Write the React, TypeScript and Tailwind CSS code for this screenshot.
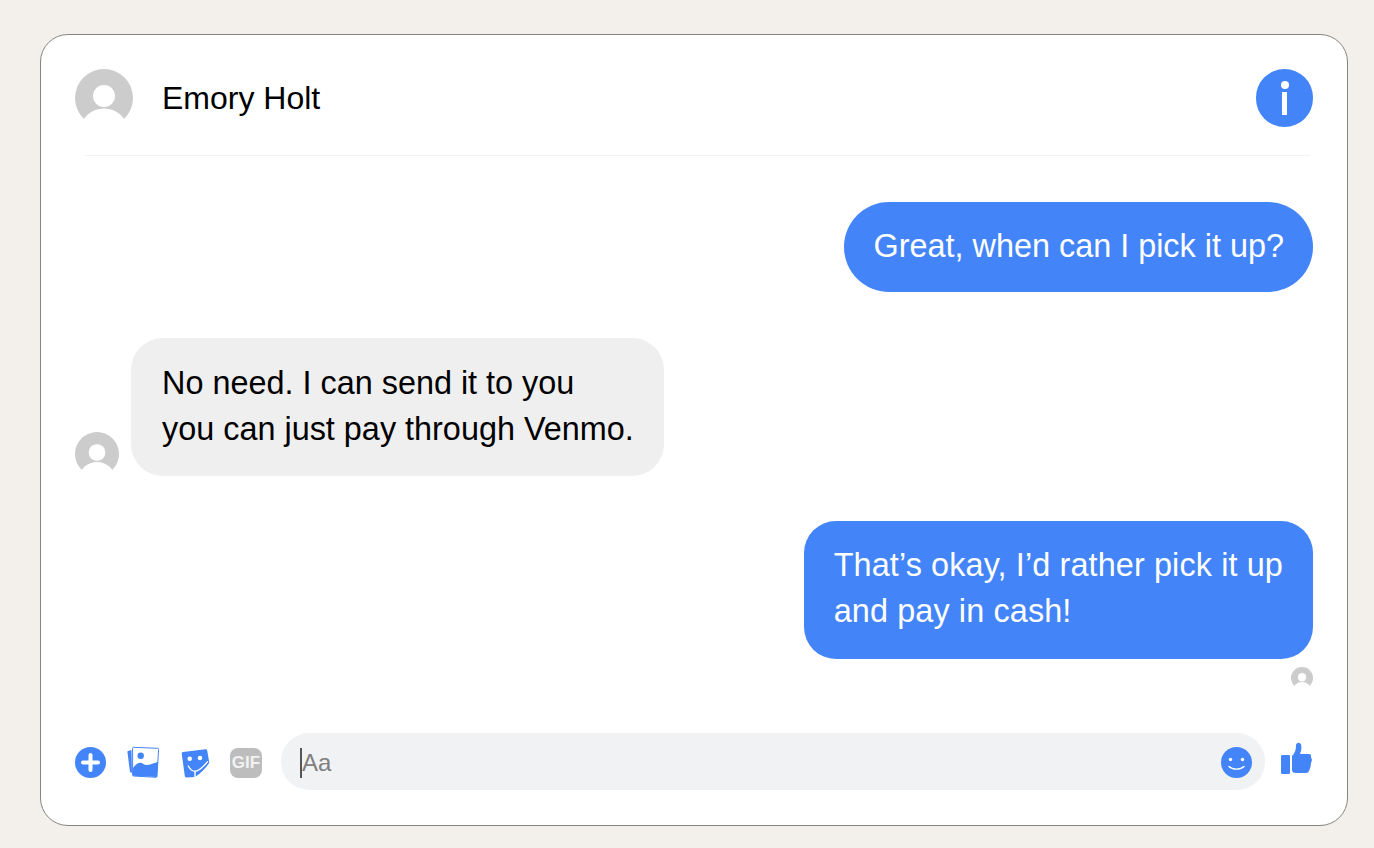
import React from 'react';

function Avatar({ size }: { size: number }) {
  return (
    <svg width={size} height={size} viewBox="0 0 58 58" className="shrink-0">
      <circle cx="29" cy="29" r="29" fill="#cccccc" />
      <circle cx="29" cy="27" r="11" fill="#ffffff" />
      <ellipse cx="29" cy="60" rx="23" ry="20.5" fill="#ffffff" />
      <rect x="0" y="53" width="58" height="5" fill="#ffffff" />
    </svg>
  );
}

function InfoIcon() {
  return (
    <div className="w-[57px] h-[58px] rounded-full bg-[#4385f8] flex flex-col items-center justify-center shrink-0">
      <div className="w-[8px] h-[8px] rounded-full bg-white" />
      <div className="w-[5px] h-[23px] bg-white mt-[3px]" />
    </div>
  );
}

function PlusIcon() {
  return (
    <svg width="31" height="31" viewBox="0 0 31 31" className="shrink-0">
      <circle cx="15.5" cy="15.5" r="15.5" fill="#4385f8" />
      <path d="M15.5 8v15M8 15.5h15" stroke="#fff" strokeWidth="4" strokeLinecap="round" />
    </svg>
  );
}

function PhotosIcon() {
  return (
    <svg width="33" height="33" viewBox="0 0 33 33" className="shrink-0">
      <path d="M4.5 4 L1 5 Q0.3 5.3 0.5 6.5 L3 26 L5 27 Z" fill="#4385f8" />
      <path d="M6.5 1.3 L30.7 2.3 Q31.7 2.4 31.6 3.4 L30 30.5 Q29.9 31.4 29 31.3 L6.5 30 Q5.6 30 5.6 29 L5.6 2.2 Q5.6 1.3 6.5 1.3 Z" fill="#fff" stroke="#4385f8" strokeWidth="1" />
      <path d="M6 22 C8 19 10 17 13 16.7 C15.5 16.5 17 19 19.7 19 C23 19 27 17 31 15.7 L29.8 31 L6 29.8 Z" fill="#4385f8" />
      <circle cx="13.7" cy="9.7" r="3.2" fill="#4385f8" />
    </svg>
  );
}

function StickerIcon() {
  return (
    <svg width="30" height="30" viewBox="0 0 30 30" className="shrink-0">
      <path d="M1.7 5.5 Q1.5 4.2 3 4 L25.5 1.2 Q27 1 27.2 2.5 L29.3 14.7 Q24 23 15 29 L7 29.5 Q5 29.5 4.8 28 Z" fill="#4385f8" />
      <circle cx="9.7" cy="10.7" r="2.3" fill="#fff" />
      <circle cx="20" cy="10" r="2.3" fill="#fff" />
      <path d="M8.3 18 C10 21 12 23.3 15 23.3 C20 23 24 18 27.5 13.7 M15 23.3 L15 29" fill="none" stroke="#fff" strokeWidth="1.4" strokeLinecap="round" />
    </svg>
  );
}

function GifIcon() {
  return (
    <div className="w-[32px] h-[30px] rounded-[8px] bg-[#bdbdbd] flex items-center justify-center shrink-0 text-[#f2f2f2] text-[17px] font-bold leading-none">
      GIF
    </div>
  );
}

function SmileIcon() {
  return (
    <svg width="31" height="31" viewBox="0 0 31 31" className="shrink-0">
      <circle cx="15.5" cy="15.5" r="15.5" fill="#4385f8" />
      <circle cx="9.5" cy="12.5" r="1.7" fill="#fff" />
      <circle cx="21.5" cy="12.5" r="1.7" fill="#fff" />
      <path d="M8 19.5 C11.5 23 19.5 23 23 19.5" fill="none" stroke="#fff" strokeWidth="1.4" strokeLinecap="round" />
    </svg>
  );
}

function ThumbIcon() {
  return (
    <svg width="31" height="32" viewBox="0 0 31 32" className="shrink-0">
      <rect x="0" y="13" width="9" height="19" rx="1.2" fill="#4385f8" />
      <path d="M11 14 C14 11 15 8 15 3 C15 0.5 19 -0.5 20 2.5 C21 6 20 9 19 12 L28 12 Q30.5 12 30 15 L31 18 L30 21 L29.5 25 L28 29 Q27.5 31 25 31 L15 31 Q11 31 11 28 Z" fill="#4385f8" />
    </svg>
  );
}

export default function App() {
  return (
    <div className="min-h-screen bg-[#f3f0eb] pt-[34px] pl-[40px] font-['Liberation_Sans',Arial,sans-serif]">
      <div className="w-[1308px] h-[792px] bg-white border border-[#85847e] rounded-[28px] px-[34px] pt-[34px] flex flex-col">
        {/* Header */}
        <div className="flex items-center justify-between h-[58px]">
          <div className="flex items-center gap-[29px]">
            <Avatar size={58} />
            <span className="text-[32px] text-black leading-none">Emory Holt</span>
          </div>
          <InfoIcon />
        </div>
        <div className="h-px bg-[#f3f3f3] mt-[28px] ml-[10px] mr-[3px]" />

        {/* Messages */}
        <div className="flex justify-end mt-[46px]">
          <div className="bg-[#4385f8] text-white text-[32.4px] leading-[46px] rounded-[45px] pl-[30px] pr-[29px] pt-[21px] pb-[23px] whitespace-nowrap">
            Great, when can I pick it up?
          </div>
        </div>

        <div className="flex items-end gap-[12px] mt-[46px]">
          <Avatar size={44} />
          <div className="bg-[#efefef] text-black text-[32.4px] leading-[46px] rounded-[32px] pl-[31px] pr-[30px] pt-[22px] pb-[24px] whitespace-nowrap">
            No need. I can send it to you
            <br />
            you can just pay through Venmo.
          </div>
        </div>

        <div className="flex justify-end mt-[45px]">
          <div className="bg-[#4385f8] text-white text-[32.4px] leading-[46px] tracking-[0.12px] rounded-[32px] pl-[30px] pr-[30px] pt-[21px] pb-[25px] whitespace-nowrap">
            That’s okay, I’d rather pick it up
            <br />
            and pay in cash!
          </div>
        </div>

        <div className="flex justify-end mt-[8px]">
          <Avatar size={22} />
        </div>

        {/* Composer */}
        <div className="flex items-center mt-[44px] h-[57px]">
          <div className="mt-[2px] flex items-center">
            <PlusIcon />
            <div className="ml-[21px]">
              <PhotosIcon />
            </div>
            <div className="ml-[20px]">
              <StickerIcon />
            </div>
            <div className="ml-[20px]">
              <GifIcon />
            </div>
          </div>
          <div className="ml-[19px] w-[984px] h-[57px] rounded-[28px] bg-[#f1f2f4] flex items-center pl-[19px] pr-[13px]">
            <div className="w-[2px] h-[30px] bg-[#555555] mt-[2px]" />
            <span className="text-[24px] text-[#808080] leading-none mt-[3px]">Aa</span>
            <div className="ml-auto mt-[1px]">
              <SmileIcon />
            </div>
          </div>
          <div className="ml-[16px] -mt-[8px]">
            <ThumbIcon />
          </div>
        </div>
      </div>
    </div>
  );
}
